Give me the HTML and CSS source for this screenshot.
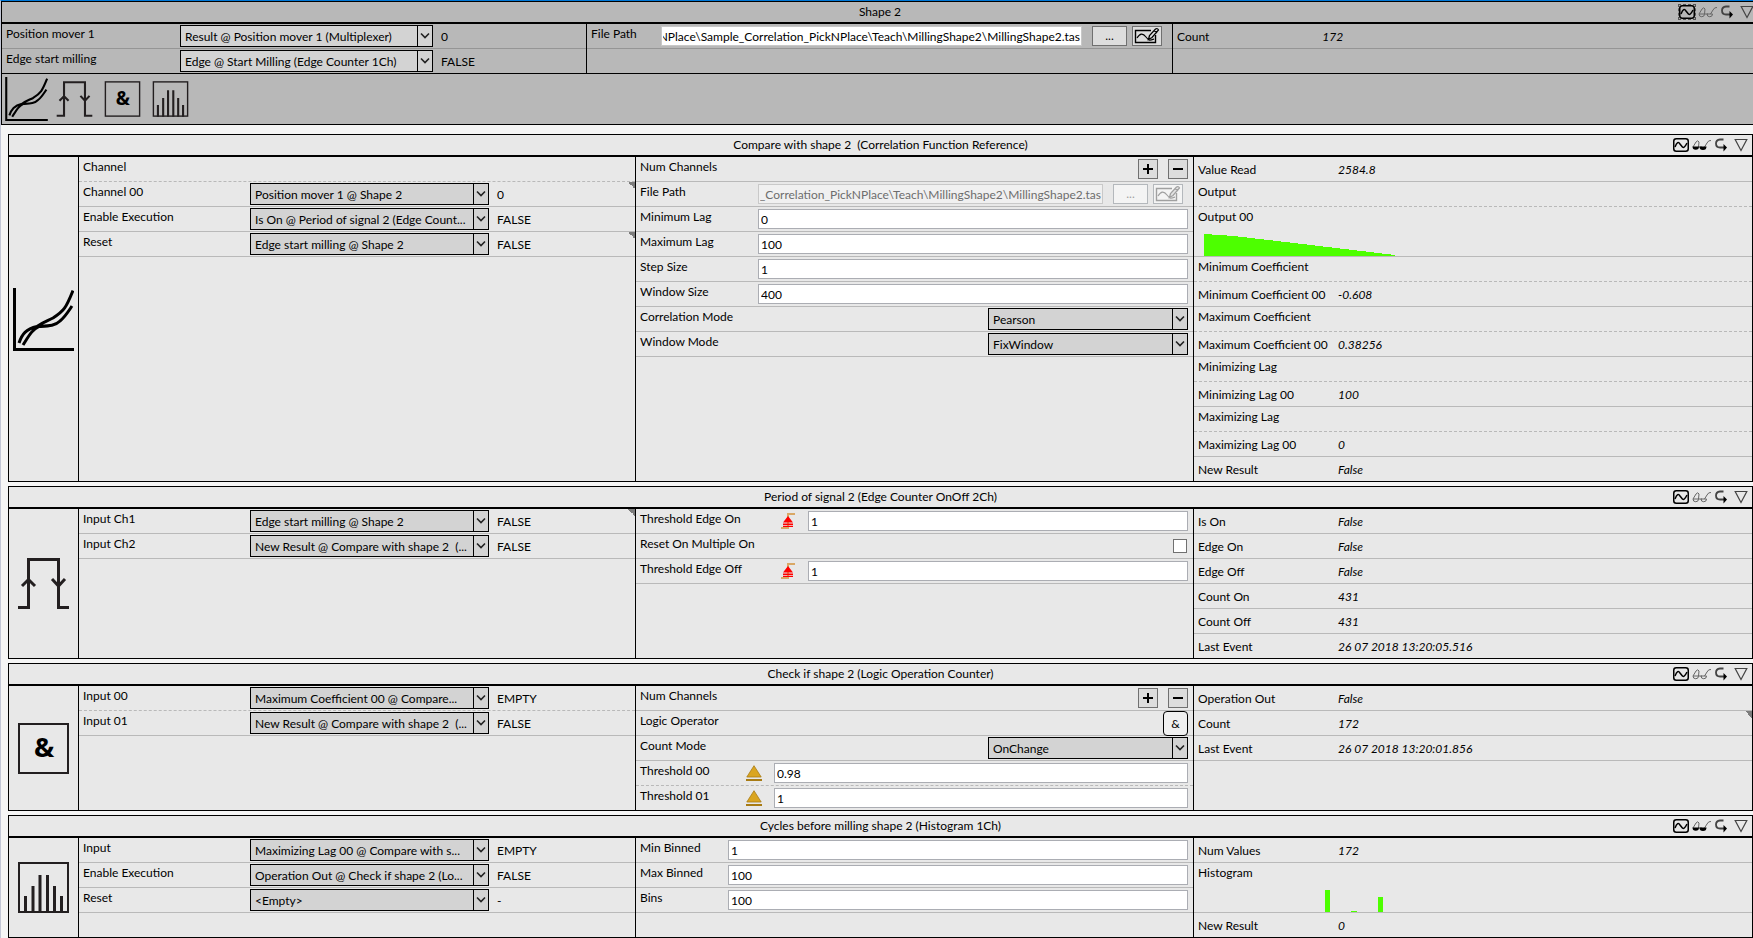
FILE: index.html
```html
<!DOCTYPE html>
<html lang="en">
<head>
<meta charset="utf-8">
<title>Shape 2</title>
<link rel="stylesheet" href="styles.css">
</head>
<body>
<svg class="defs" aria-hidden="true">
  <symbol id="i-corr" viewBox="0 0 61 63">
    <path d="M1.500 0V61.500H61" fill="none" stroke="#000" stroke-width="3"/>
    <path d="M6 55C9 46 13 41 24 38.500C30 34 34 33 40 30C51 23 53 20 60 2.500M10 57C17 46 19 42 26 38.500C36 38 42 38 47 33C52 29 55 24 59 18" fill="none" stroke="#000" stroke-width="3"/>
  </symbol>
  <symbol id="i-pulse" viewBox="0 0 61 63">
    <path d="M5 55.500H15.500V7.500H45.500V55.500H56M9 34L15.500 27.500L22 34M39 27L45.500 34L52 27" fill="none" stroke="#231f20" stroke-width="3"/>
  </symbol>
  <symbol id="i-and" viewBox="0 0 61 63">
    <rect x="6" y="7" width="49" height="49" fill="none" stroke="#231f20" stroke-width="2"/>
    <text x="31" y="40" text-anchor="middle" class="amp">&amp;</text>
  </symbol>
  <symbol id="i-hist" viewBox="0 0 61 63">
    <rect x="6" y="7" width="49" height="49" fill="none" stroke="#231f20" stroke-width="2"/>
    <path d="M12.500 40V57M20 30V57M27 19V57M34.500 19V57M41.500 30V57M48.500 40V57" stroke="#231f20" stroke-width="3"/>
  </symbol>
  <symbol id="i-wave" viewBox="0 0 16 14">
    <rect x=".75" y=".75" width="14.500" height="12.500" rx="2.500" fill="none" stroke="#000" stroke-width="1.500"/>
    <path d="M2 9C4 4 5.500 3.500 7 6L9 8.500C10.500 10.500 12 9 14 5" fill="none" stroke="#000" stroke-width="1.500"/>
  </symbol>
  <symbol id="i-glasses" viewBox="0 0 20 14">
    <path d="M1 9L4 4Q6 1.500 7 4L6.500 9M7 9H10M12.500 9L15 5Q16.500 2 19 2.500M1 9H6.500A2.700 2.700 0 0 1 1 9M9 9H14.500A2.700 2.700 0 0 1 9 9" fill="none" stroke="#666" stroke-width="1"/>
  </symbol>
  <symbol id="i-glasses-on" viewBox="0 0 20 14">
    <path d="M1 9L4 4Q6 1.500 7 4L6.500 9M7 9H10M12.500 9L15 5Q16.500 2 19 2.500" fill="none" stroke="#666" stroke-width="1"/>
    <path d="M.5 8.500H7A3 3 0 0 1 .5 8.500M7.500 8.500H14.500A3.200 3.200 0 0 1 7.500 8.500" fill="#000"/>
  </symbol>
  <symbol id="i-arrow" viewBox="0 0 12 14">
    <path d="M8.500 1.500H5Q1 2 1 5.500Q1 9.500 5 9.500H10" fill="none" stroke="#444" stroke-width="1.800"/>
    <path d="M8.500 6L12 9.500L8.500 13.500Z" fill="#000"/>
  </symbol>
  <symbol id="i-tri" viewBox="0 0 14 14">
    <path d="M1.200 1.500H12.800L7 12.500Z" fill="none" stroke="#444" stroke-width="1.200"/>
  </symbol>
  <symbol id="i-chev" viewBox="0 0 14 20">
    <path d="M3 7.500L7 11.500L11 7.500" fill="none" stroke="#222" stroke-width="1.600"/>
  </symbol>
  <symbol id="i-edit" viewBox="0 0 28 18">
    <path d="M18 3.500H2.500V15.500H22.500V8" fill="none" stroke="currentColor" stroke-width="1.400"/>
    <path d="M4 11C7 6 10 6 13 10S17 13.500 21 12" fill="none" stroke="currentColor" stroke-width="1.200"/>
    <path d="M15.500 12.500L16.500 8.500L22.500 2Q24.500 1 25.500 3L19 10.500ZM21 3.500L24 6" fill="#e4e4e4" stroke="currentColor" stroke-width="1.300"/>
  </symbol>
  <symbol id="i-edge" viewBox="0 0 14 16">
    <path d="M0 15H7V1H14" fill="none" stroke="#d9a866" stroke-width="2"/>
    <path d="M7 3L12 9.500H2ZM2 10.500H12V12H2ZM2 12.800H12V14H2Z" fill="#f00"/>
  </symbol>
  <symbol id="i-level" viewBox="0 0 16 17">
    <path d="M8 .7L15.200 12H.8Z" fill="#daa520" stroke="#a87b14" stroke-width=".8"/>
    <path d="M0 14H16V16H0Z" fill="#a87b14"/>
  </symbol>
</svg>

<main class="page">
  <section class="outer">
    <header class="head">
      <h1 class="title">Shape 2</h1>
      <div class="tools">
        <button class="tool tool-focus" aria-label="Show signal"><svg width="16" height="14"><use href="#i-wave"/></svg></button>
        <button class="tool" aria-label="Watch"><svg width="20" height="14"><use href="#i-glasses"/></svg></button>
        <button class="tool tool-arrow" aria-label="Redirect"><svg width="12" height="14"><use href="#i-arrow"/></svg></button>
        <button class="tool" aria-label="Collapse"><svg width="14" height="14"><use href="#i-tri"/></svg></button>
      </div>
    </header>
    <div class="outer-cols">
      <div class="col inputs">
        <div class="row"><label class="label" for="s1">Position mover 1</label><span class="pick"><select id="s1"><option>Result @ Position mover 1 (Multiplexer)</option></select><svg><use href="#i-chev"/></svg></span><output class="state">0</output></div>
        <div class="row flush"><label class="label" for="s2">Edge start milling</label><span class="pick"><select id="s2"><option>Edge @ Start Milling (Edge Counter 1Ch)</option></select><svg><use href="#i-chev"/></svg></span><output class="state">FALSE</output></div>
      </div>
      <div class="col params">
        <div class="row row-path"><label class="label" for="path1">File Path</label><input class="field path" id="path1" value="&lrm;NPlace\Sample_Correlation_PickNPlace\Teach\MillingShape2\MillingShape2.tas"><button class="btn browse">...</button><button class="btn edit" aria-label="Edit curve"><svg width="28" height="18"><use href="#i-edit"/></svg></button></div>
      </div>
      <div class="col results">
        <div class="row"><span class="name">Count</span><output class="value">172</output></div>
      </div>
    </div>
    <nav class="bar">
      <svg><use href="#i-corr"/></svg>
      <svg><use href="#i-pulse"/></svg>
      <svg><use href="#i-and"/></svg>
      <svg><use href="#i-hist"/></svg>
    </nav>
  </section>

  <div class="panels">
    <section class="panel">
      <header class="head">
        <h2 class="title">Compare with shape 2&nbsp; (Correlation Function Reference)</h2>
        <div class="tools">
          <button class="tool" aria-label="Show signal"><svg width="16" height="14"><use href="#i-wave"/></svg></button>
          <button class="tool" aria-label="Watch"><svg width="20" height="14"><use href="#i-glasses-on"/></svg></button>
          <button class="tool tool-arrow" aria-label="Redirect"><svg width="12" height="14"><use href="#i-arrow"/></svg></button>
          <button class="tool" aria-label="Collapse"><svg width="14" height="14"><use href="#i-tri"/></svg></button>
        </div>
      </header>
      <div class="body">
        <div class="kind"><svg><use href="#i-corr"/></svg></div>
        <div class="col inputs">
          <div class="row dashed"><span class="label">Channel</span></div>
          <div class="row marked"><label class="label" for="s3">Channel 00</label><span class="pick"><select id="s3"><option>Position mover 1 @ Shape 2</option></select><svg><use href="#i-chev"/></svg></span><output class="state">0</output></div>
          <div class="row"><label class="label" for="s4">Enable Execution</label><span class="pick"><select id="s4"><option>Is On @ Period of signal 2 (Edge Count...</option></select><svg><use href="#i-chev"/></svg></span><output class="state">FALSE</output></div>
          <div class="row marked"><label class="label" for="s5">Reset</label><span class="pick"><select id="s5"><option>Edge start milling @ Shape 2</option></select><svg><use href="#i-chev"/></svg></span><output class="state">FALSE</output></div>
        </div>
        <div class="col params params-corr">
          <div class="row"><span class="label">Num Channels</span><div class="pair"><button class="btn step" aria-label="Add channel"><svg width="12" height="12"><path d="M6 1V11M1 6H11" stroke="#000" stroke-width="2"/></svg></button><button class="btn step" aria-label="Remove channel"><svg width="12" height="12"><path d="M1 6H11" stroke="#000" stroke-width="2"/></svg></button></div></div>
          <div class="row row-path"><label class="label" for="path2">File Path</label><input class="field path" id="path2" disabled value="&lrm;_Correlation_PickNPlace\Teach\MillingShape2\MillingShape2.tas"><button class="btn browse" disabled>...</button><button class="btn edit" disabled aria-label="Edit curve"><svg width="28" height="18"><use href="#i-edit"/></svg></button></div>
          <div class="row"><label class="label" for="f1">Minimum Lag</label><input class="field" id="f1" value="0"></div>
          <div class="row"><label class="label" for="f2">Maximum Lag</label><input class="field" id="f2" value="100"></div>
          <div class="row"><label class="label" for="f3">Step Size</label><input class="field" id="f3" value="1"></div>
          <div class="row"><label class="label" for="f4">Window Size</label><input class="field" id="f4" value="400"></div>
          <div class="row"><label class="label" for="s6">Correlation Mode</label><span class="pick mode"><select id="s6"><option>Pearson</option></select><svg><use href="#i-chev"/></svg></span></div>
          <div class="row"><label class="label" for="s7">Window Mode</label><span class="pick mode"><select id="s7"><option>FixWindow</option></select><svg><use href="#i-chev"/></svg></span></div>
        </div>
        <div class="col results">
          <div class="row"><span class="name">Value Read</span><output class="value">2584.8</output></div>
          <div class="row dashed"><span class="label">Output</span></div>
          <div class="row tall"><span class="label">Output 00</span><svg class="chart" width="191" height="22" shape-rendering="crispEdges"><path d="M0 0L30 2L90 9L191 21V22H0Z" fill="#4dff00"/></svg></div>
          <div class="row dashed"><span class="label">Minimum Coefficient</span></div>
          <div class="row"><span class="name">Minimum Coefficient 00</span><output class="value">-0.608</output></div>
          <div class="row dashed"><span class="label">Maximum Coefficient</span></div>
          <div class="row"><span class="name">Maximum Coefficient 00</span><output class="value">0.38256</output></div>
          <div class="row dashed"><span class="label">Minimizing Lag</span></div>
          <div class="row"><span class="name">Minimizing Lag 00</span><output class="value">100</output></div>
          <div class="row dashed"><span class="label">Maximizing Lag</span></div>
          <div class="row"><span class="name">Maximizing Lag 00</span><output class="value">0</output></div>
          <div class="row flush"><span class="name">New Result</span><output class="value">False</output></div>
        </div>
      </div>
    </section>

    <section class="panel">
      <header class="head">
        <h2 class="title">Period of signal 2 (Edge Counter OnOff 2Ch)</h2>
        <div class="tools">
          <button class="tool" aria-label="Show signal"><svg width="16" height="14"><use href="#i-wave"/></svg></button>
          <button class="tool" aria-label="Watch"><svg width="20" height="14"><use href="#i-glasses"/></svg></button>
          <button class="tool tool-arrow" aria-label="Redirect"><svg width="12" height="14"><use href="#i-arrow"/></svg></button>
          <button class="tool" aria-label="Collapse"><svg width="14" height="14"><use href="#i-tri"/></svg></button>
        </div>
      </header>
      <div class="body">
        <div class="kind"><svg><use href="#i-pulse"/></svg></div>
        <div class="col inputs">
          <div class="row marked"><label class="label" for="s8">Input Ch1</label><span class="pick"><select id="s8"><option>Edge start milling @ Shape 2</option></select><svg><use href="#i-chev"/></svg></span><output class="state">FALSE</output></div>
          <div class="row"><label class="label" for="s9">Input Ch2</label><span class="pick"><select id="s9"><option>New Result @ Compare with shape 2&nbsp; (...</option></select><svg><use href="#i-chev"/></svg></span><output class="state">FALSE</output></div>
        </div>
        <div class="col params params-edge">
          <div class="row"><label class="label" for="f5">Threshold Edge On</label><svg class="mark-edge"><use href="#i-edge"/></svg><input class="field" id="f5" value="1"></div>
          <div class="row"><label class="label wide" for="c1">Reset On Multiple On</label><input type="checkbox" class="check" id="c1"></div>
          <div class="row"><label class="label" for="f6">Threshold Edge Off</label><svg class="mark-edge"><use href="#i-edge"/></svg><input class="field" id="f6" value="1"></div>
        </div>
        <div class="col results">
          <div class="row"><span class="name">Is On</span><output class="value">False</output></div>
          <div class="row"><span class="name">Edge On</span><output class="value">False</output></div>
          <div class="row"><span class="name">Edge Off</span><output class="value">False</output></div>
          <div class="row"><span class="name">Count On</span><output class="value">431</output></div>
          <div class="row"><span class="name">Count Off</span><output class="value">431</output></div>
          <div class="row flush"><span class="name">Last Event</span><output class="value">26 07 2018 13:20:05.516</output></div>
        </div>
      </div>
    </section>

    <section class="panel">
      <header class="head">
        <h2 class="title">Check if shape 2 (Logic Operation Counter)</h2>
        <div class="tools">
          <button class="tool" aria-label="Show signal"><svg width="16" height="14"><use href="#i-wave"/></svg></button>
          <button class="tool" aria-label="Watch"><svg width="20" height="14"><use href="#i-glasses"/></svg></button>
          <button class="tool tool-arrow" aria-label="Redirect"><svg width="12" height="14"><use href="#i-arrow"/></svg></button>
          <button class="tool" aria-label="Collapse"><svg width="14" height="14"><use href="#i-tri"/></svg></button>
        </div>
      </header>
      <div class="body">
        <div class="kind"><svg><use href="#i-and"/></svg></div>
        <div class="col inputs">
          <div class="row dashed"><label class="label" for="s10">Input 00</label><span class="pick"><select id="s10"><option>Maximum Coefficient 00 @ Compare...</option></select><svg><use href="#i-chev"/></svg></span><output class="state">EMPTY</output></div>
          <div class="row"><label class="label" for="s11">Input 01</label><span class="pick"><select id="s11"><option>New Result @ Compare with shape 2&nbsp; (...</option></select><svg><use href="#i-chev"/></svg></span><output class="state">FALSE</output></div>
        </div>
        <div class="col params params-logic">
          <div class="row"><span class="label">Num Channels</span><div class="pair"><button class="btn step" aria-label="Add channel"><svg width="12" height="12"><path d="M6 1V11M1 6H11" stroke="#000" stroke-width="2"/></svg></button><button class="btn step" aria-label="Remove channel"><svg width="12" height="12"><path d="M1 6H11" stroke="#000" stroke-width="2"/></svg></button></div></div>
          <div class="row"><label class="label" for="op">Logic Operator</label><button class="op" id="op">&amp;</button></div>
          <div class="row"><label class="label" for="s12">Count Mode</label><span class="pick mode"><select id="s12"><option>OnChange</option></select><svg><use href="#i-chev"/></svg></span></div>
          <div class="row dashed"><label class="label" for="f7">Threshold 00</label><svg class="mark-level"><use href="#i-level"/></svg><input class="field" id="f7" value="0.98"></div>
          <div class="row flush"><label class="label" for="f8">Threshold 01</label><svg class="mark-level"><use href="#i-level"/></svg><input class="field" id="f8" value="1"></div>
        </div>
        <div class="col results">
          <div class="row"><span class="name">Operation Out</span><output class="value">False</output></div>
          <div class="row marked"><span class="name">Count</span><output class="value">172</output></div>
          <div class="row"><span class="name">Last Event</span><output class="value">26 07 2018 13:20:01.856</output></div>
        </div>
      </div>
    </section>

    <section class="panel">
      <header class="head">
        <h2 class="title">Cycles before milling shape 2 (Histogram 1Ch)</h2>
        <div class="tools">
          <button class="tool" aria-label="Show signal"><svg width="16" height="14"><use href="#i-wave"/></svg></button>
          <button class="tool" aria-label="Watch"><svg width="20" height="14"><use href="#i-glasses-on"/></svg></button>
          <button class="tool tool-arrow" aria-label="Redirect"><svg width="12" height="14"><use href="#i-arrow"/></svg></button>
          <button class="tool" aria-label="Collapse"><svg width="14" height="14"><use href="#i-tri"/></svg></button>
        </div>
      </header>
      <div class="body">
        <div class="kind"><svg><use href="#i-hist"/></svg></div>
        <div class="col inputs">
          <div class="row"><label class="label" for="s13">Input</label><span class="pick"><select id="s13"><option>Maximizing Lag 00 @ Compare with s...</option></select><svg><use href="#i-chev"/></svg></span><output class="state">EMPTY</output></div>
          <div class="row"><label class="label" for="s14">Enable Execution</label><span class="pick"><select id="s14"><option>Operation Out @ Check if shape 2 (Lo...</option></select><svg><use href="#i-chev"/></svg></span><output class="state">FALSE</output></div>
          <div class="row"><label class="label" for="s15">Reset</label><span class="pick"><select id="s15"><option>&lt;Empty&gt;</option></select><svg><use href="#i-chev"/></svg></span><output class="state">-</output></div>
        </div>
        <div class="col params params-hist">
          <div class="row"><label class="label" for="f9">Min Binned</label><input class="field" id="f9" value="1"></div>
          <div class="row"><label class="label" for="f10">Max Binned</label><input class="field" id="f10" value="100"></div>
          <div class="row"><label class="label" for="f11">Bins</label><input class="field" id="f11" value="100"></div>
        </div>
        <div class="col results">
          <div class="row"><span class="name">Num Values</span><output class="value">172</output></div>
          <div class="row tall"><span class="label">Histogram</span><svg class="chart chart-hist" width="60" height="22" shape-rendering="crispEdges"><path d="M0 0H5V22H0ZM26 21H32V22H26ZM53 7H58V22H53Z" fill="#4dff00"/></svg></div>
          <div class="row flush"><span class="name">New Result</span><output class="value">0</output></div>
        </div>
      </div>
    </section>
  </div>
</main>
</body>
</html>
```
FILE: styles.css
```css
* { box-sizing: border-box; }

body {
  margin: 0;
  background: #f5f5f5;
  color: #000;
  font: 12px/18px Lato, "Open Sans", sans-serif;
  overflow: hidden;
}

button, input, select {
  font: inherit;
  color: inherit;
  margin: 0;
}

.defs { display: none; }

.amp { font: bold 27px "Open Sans", sans-serif; }

.page {
  border-top: 1px solid #0078d7;
  border-left: 1px solid #c3c7d6;
}

/* Header rows shared by the outer block and the panels */
.head {
  display: grid;
  grid-template-columns: 1fr auto 1fr;
  height: 22px;
  border-bottom: 2px solid #000;
}

.title {
  grid-column: 2;
  margin: 0;
  font-size: 12px;
  font-weight: normal;
  line-height: 20px;
}

.tools {
  display: flex;
  justify-content: flex-end;
  align-items: center;
  gap: 3px;
  padding-right: 4px;
}

.tool {
  display: flex;
  border: 0;
  padding: 0;
  background: none;
}

.tool-arrow { margin-right: 4px; }

.tool-focus { outline: 1px dashed #555; }

/* Outer block */
.outer {
  margin-right: -6px;
  border: 1px solid #000;
  background: #b8b8b8;
}

.outer-cols {
  display: grid;
  grid-template-columns: minmax(0, 584fr) minmax(0, 586fr) minmax(0, 586fr);
  border-bottom: 1px solid #000;
}

.bar {
  display: flex;
  gap: 5px;
  padding: 3px;
}

.bar svg {
  width: 43px;
  height: 44px;
}

/* Panels */
.panels {
  display: flex;
  flex-direction: column;
  gap: 4px;
  padding: 9px 0 0 7px;
}

.panel {
  border: 1px solid #000;
  background: #e8e8e8;
}

.body {
  display: grid;
  grid-template-columns: 69px minmax(0, 557fr) minmax(0, 558fr) minmax(0, 559fr);
}

.kind {
  display: flex;
  align-items: center;
  justify-content: center;
}

.kind svg {
  width: 61px;
  height: 63px;
}

.col { border-left: 1px solid #000; }
.outer .col:first-child { border-left: 0; }

.row {
  display: flex;
  align-items: flex-start;
  height: 25px;
  padding: 1px 0 0 4px;
  border-bottom: 1px solid #b9b9b9;
  white-space: nowrap;
}

.outer .row { border-bottom-color: #959595; }
.row.dashed { border-bottom-style: dashed; }
.row.flush { height: 24px; border-bottom: 0; }
.outer .row.flush { border-bottom: 0; }

.row.marked {
  background: linear-gradient(to bottom left, #7c7c7c 50%, transparent 50%) right top / 7px 7px no-repeat;
}

.row.tall {
  height: 50px;
  flex-direction: column;
  justify-content: space-between;
}

.chart { margin-left: 6px; flex: none; }
.chart-hist { margin-left: 127px; }

/* Input column */
.inputs .row {
  display: grid;
  grid-template-columns: 167fr 239fr 146fr;
}

.outer .inputs .row { grid-template-columns: 174fr 253fr 153fr; }

.state {
  padding-left: 8px;
  line-height: 24px;
}

.pick { display: grid; }

.pick select,
.pick svg { grid-area: 1 / 1; }

.pick select {
  width: 100%;
  height: 22px;
  padding: 1px 15px 0 4px;
  border: 1px solid #000;
  border-radius: 0;
  background: #d3d3d3;
  appearance: none;
}

.pick svg {
  justify-self: end;
  width: 15px;
  height: 20px;
  margin: 1px 1px 0 0;
  border-left: 1px solid #000;
  pointer-events: none;
}

/* Parameter column */
.params .row { padding-right: 5px; }
.params .label { flex: none; width: 70px; }
.params-corr .label { width: 118px; }
.params-edge .label { width: 141px; }
.params-edge .label.wide { width: auto; }
.params-logic .label { width: 106px; }
.params-hist .label { width: 88px; }

.params .row.row-path { padding-right: 10px; }

.field {
  flex: 1;
  min-width: 0;
  height: 20px;
  margin-top: 1px;
  padding: 0 2px;
  border: 1px solid #abadb3;
  background: #fff;
}

.path {
  direction: rtl;
  text-align: right;
  margin-right: 10px;
  padding: 0 1px;
}

.outer .path { border-color: #c8c8c8; }

.path:disabled {
  border-color: #c9c9c9;
  background: #f0f0f0;
  color: #6d6d6d;
}

.btn {
  display: flex;
  align-items: center;
  justify-content: center;
  height: 20px;
  margin-top: 1px;
  padding: 0;
  border: 1px solid #707070;
  background: #ddd;
}

.btn:disabled {
  border-color: #b4b8bc;
  background: #f4f4f4;
  color: #a0a0a0;
}

.browse { width: 35px; margin-right: 5px; }
.edit { width: 30px; }
.step { width: 20px; }

.pair {
  display: flex;
  gap: 10px;
  margin-left: auto;
}

.mode {
  width: 200px;
  margin-left: auto;
}

.check {
  appearance: none;
  width: 14px;
  height: 14px;
  margin: 4px 1px 0 auto;
  border: 1px solid #707070;
  background: #fff;
}

.mark-edge {
  flex: none;
  width: 14px;
  height: 16px;
  margin: 3px 13px 0 0;
}

.mark-level {
  flex: none;
  width: 16px;
  height: 17px;
  margin: 3px 12px 0 0;
}

.op {
  width: 25px;
  height: 25px;
  margin: -1px 0 0 auto;
  padding: 0;
  border: 1px solid #000;
  border-radius: 4px;
  background: #f0f0f0;
}

/* Result column */
.name {
  flex: none;
  width: 25%;
  min-width: 140px;
  line-height: 24px;
}

.value {
  font-style: italic;
  line-height: 24px;
}
```
